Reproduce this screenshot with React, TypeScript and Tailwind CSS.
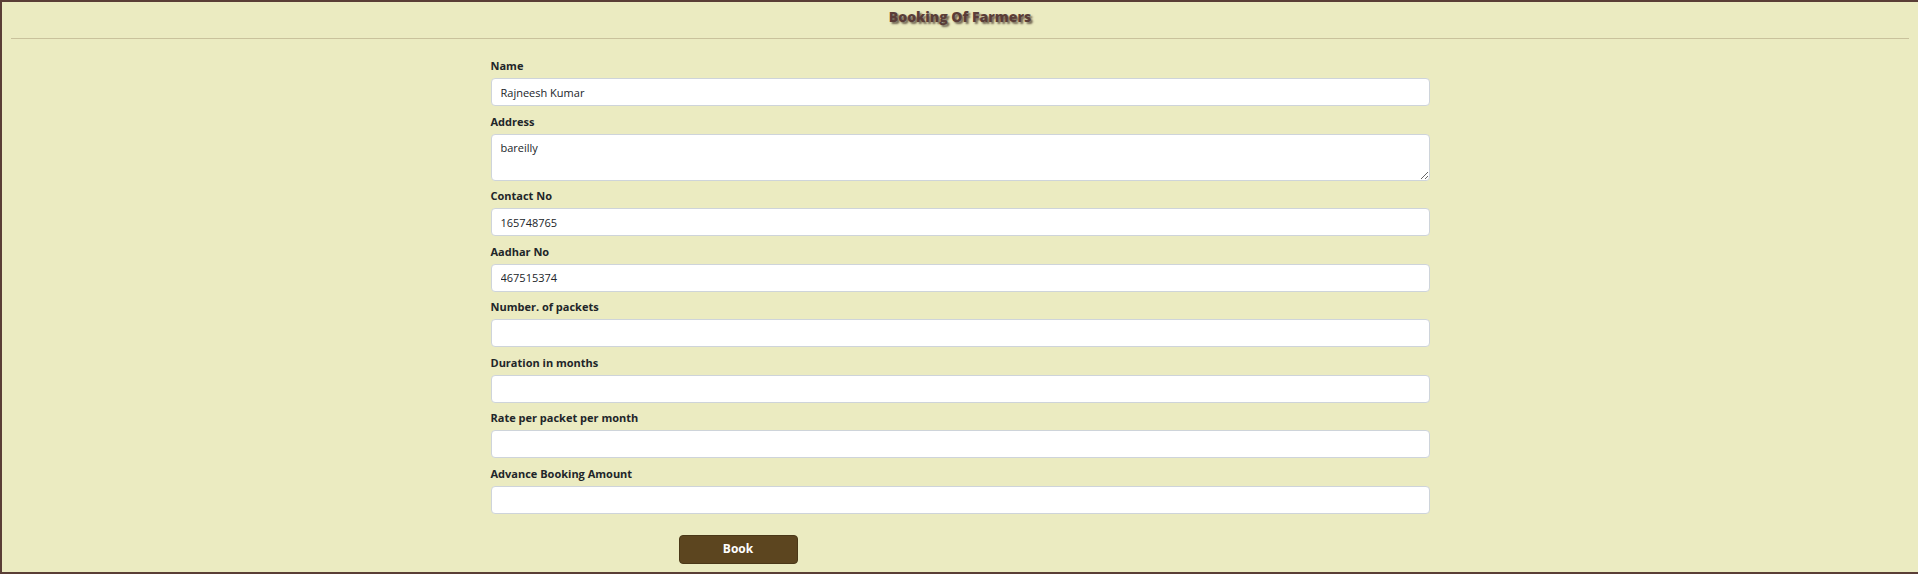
const fields = [
  { label: "Name", value: "Rajneesh Kumar" },
  { label: "Address", value: "bareilly", area: true },
  { label: "Contact No", value: "165748765" },
  { label: "Aadhar No", value: "467515374" },
  { label: "Number. of packets", value: "" },
  { label: "Duration in months", value: "" },
  { label: "Rate per packet per month", value: "" },
  { label: "Advance Booking Amount", value: "" },
];

export default function App() {
  return (
    <div className="w-full h-[582px] bg-white overflow-hidden font-['Open_Sans',sans-serif]">
      <div className="w-[1920px] h-[574px] border-2 border-[#5a3e36] bg-[#ebebc1]">
        <h5 className="pt-[5px] text-center text-[14px] leading-[20px] font-extrabold text-[#5a3d38] [text-shadow:2px_2px_2px_#6e6250]">
          Booking Of Farmers
        </h5>
        <hr className="mx-[9px] mt-[11px] border-0 border-t border-[#c9c29c]" />
        <form className="w-[939px] mx-auto pt-[18px]">
          {fields.map((f, i) => (
            <div key={f.label} className={i > 0 ? "mt-[6.5px]" : ""}>
              <label className="block text-[11px] leading-[18px] font-bold text-[#212529] mb-[3px]">
                {f.label}
              </label>
              {f.area ? (
                <textarea
                  defaultValue={f.value}
                  className="block w-full h-[47px] rounded border border-[#ced4da] bg-white px-[9px] py-[5px] text-[11px] leading-[16px] text-[#212529] outline-none"
                />
              ) : (
                <input
                  defaultValue={f.value}
                  className="block w-full h-[28px] rounded border border-[#ced4da] bg-white px-[9px] text-[11px] text-[#212529] outline-none"
                />
              )}
            </div>
          ))}
          <button
            type="button"
            className="mt-[21px] ml-[188px] w-[119px] h-[29px] rounded bg-[#5c451f] border border-[#4a3818] text-white text-[12px] font-bold"
          >
            Book
          </button>
        </form>
      </div>
    </div>
  );
}
